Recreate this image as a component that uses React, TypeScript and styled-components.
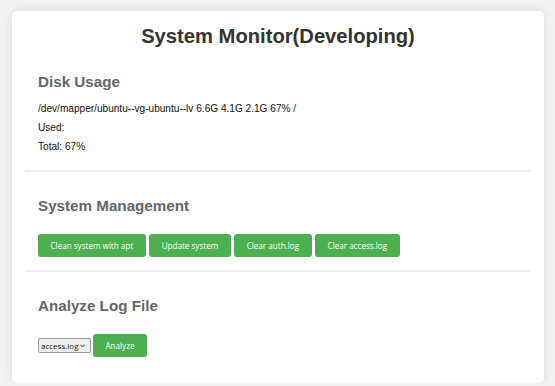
import React from 'react'
import styled, { createGlobalStyle } from 'styled-components'

const GlobalStyle = createGlobalStyle`
  html, body {
    margin: 0;
    padding: 0;
    background: #f2f2f2;
    font-family: 'Liberation Sans', Arial, sans-serif;
  }
`

const Page = styled.div`
  padding: 11px 11px 0 12px;
`

const Card = styled.div`
  background: #fff;
  border-radius: 5px;
  box-shadow: 0 0 10px rgba(0, 0, 0, 0.1);
  padding: 13px;
`

const Title = styled.h1`
  margin: 0;
  text-align: center;
  color: #333;
  font-size: 20.2px;
  line-height: 24px;
  font-weight: 700;
`

const Section = styled.section<{ $last?: boolean }>`
  padding: 25px 13px 13px;
  border-bottom: ${(p) => (p.$last ? 'none' : '2px solid #eeeeee')};
`

const Heading = styled.h2`
  margin: 0;
  padding-bottom: 8px;
  color: #666;
  font-size: 15.2px;
  line-height: 18px;
  font-weight: 700;
`

const InfoBlock = styled.div`
  padding-bottom: 1px;
`

const InfoLine = styled.p`
  margin: 0;
  color: #111;
  font-size: 10.1px;
  line-height: 19px;
`

const ButtonRow = styled.div`
  display: flex;
  gap: 3.5px;
  padding-top: 11px;
`

const ControlRow = styled.div`
  display: flex;
  align-items: center;
  gap: 2px;
  padding-top: 11px;
`

const ActionButton = styled.button`
  height: 23px;
  padding: 0 12.5px;
  border: none;
  border-radius: 3px;
  background: #4caf50;
  color: #fff;
  font-family: 'Open Sans', 'Noto Sans', sans-serif;
  font-size: 8.1px;
  cursor: pointer;
`

const SelectWrap = styled.div`
  position: relative;
  display: flex;
`

const LogSelect = styled.select`
  appearance: none;
  -webkit-appearance: none;
  width: 53px;
  height: 15px;
  margin: 0;
  padding: 0 0 0 2px;
  border: 1px solid #9a9a9a;
  border-radius: 2px;
  background: #efefef;
  color: #222;
  font-family: 'Open Sans', 'Noto Sans', sans-serif;
  font-size: 8px;
  line-height: 13px;
  outline: none;
`

const Chevron = styled.svg`
  position: absolute;
  right: 6px;
  top: 5.5px;
  width: 5px;
  height: 4px;
  pointer-events: none;
`

export default function App() {
  return (
    <>
      <GlobalStyle />
      <Page>
        <Card>
          <Title>System Monitor(Developing)</Title>

          <Section>
            <Heading>Disk Usage</Heading>
            <InfoBlock>
              <InfoLine>/dev/mapper/ubuntu--vg-ubuntu--lv 6.6G 4.1G 2.1G 67% /</InfoLine>
              <InfoLine>Used:</InfoLine>
              <InfoLine>Total: 67%</InfoLine>
            </InfoBlock>
          </Section>

          <Section>
            <Heading>System Management</Heading>
            <ButtonRow>
              <ActionButton>Clean system with apt</ActionButton>
              <ActionButton>Update system</ActionButton>
              <ActionButton>Clear auth.log</ActionButton>
              <ActionButton>Clear access.log</ActionButton>
            </ButtonRow>
          </Section>

          <Section $last>
            <Heading>Analyze Log File</Heading>
            <ControlRow>
              <SelectWrap>
                <LogSelect defaultValue="access.log">
                  <option value="access.log">access.log</option>
                  <option value="auth.log">auth.log</option>
                </LogSelect>
                <Chevron viewBox="0 0 5 4">
                  <path d="M0.5 0.8 L2.5 3 L4.5 0.8" fill="none" stroke="#333" strokeWidth="1" />
                </Chevron>
              </SelectWrap>
              <ActionButton>Analyze</ActionButton>
            </ControlRow>
          </Section>
        </Card>
      </Page>
    </>
  )
}
